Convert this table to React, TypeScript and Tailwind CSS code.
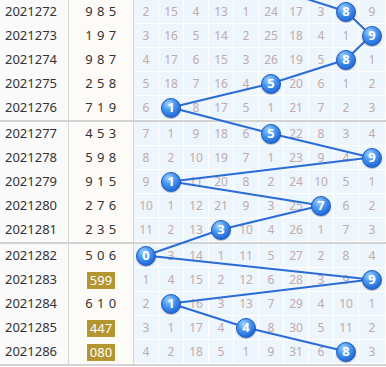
const rows = [
  { id: "2021272", num: "985", hl: false, ball: 8, miss: [2, 15, 4, 13, 1, 24, 17, 3, 8, 9] },
  { id: "2021273", num: "197", hl: false, ball: 9, miss: [3, 16, 5, 14, 2, 25, 18, 4, 1, 9] },
  { id: "2021274", num: "987", hl: false, ball: 8, miss: [4, 17, 6, 15, 3, 26, 19, 5, 8, 1] },
  { id: "2021275", num: "258", hl: false, ball: 5, miss: [5, 18, 7, 16, 4, 5, 20, 6, 1, 2] },
  { id: "2021276", num: "719", hl: false, ball: 1, miss: [6, 1, 8, 17, 5, 1, 21, 7, 2, 3] },
  { id: "2021277", num: "453", hl: false, ball: 5, miss: [7, 1, 9, 18, 6, 5, 22, 8, 3, 4] },
  { id: "2021278", num: "598", hl: false, ball: 9, miss: [8, 2, 10, 19, 7, 1, 23, 9, 4, 9] },
  { id: "2021279", num: "915", hl: false, ball: 1, miss: [9, 1, 11, 20, 8, 2, 24, 10, 5, 1] },
  { id: "2021280", num: "276", hl: false, ball: 7, miss: [10, 1, 12, 21, 9, 3, 25, 7, 6, 2] },
  { id: "2021281", num: "235", hl: false, ball: 3, miss: [11, 2, 13, 3, 10, 4, 26, 1, 7, 3] },
  { id: "2021282", num: "506", hl: false, ball: 0, miss: [0, 3, 14, 1, 11, 5, 27, 2, 8, 4] },
  { id: "2021283", num: "599", hl: true, ball: 9, miss: [1, 4, 15, 2, 12, 6, 28, 3, 9, 9] },
  { id: "2021284", num: "610", hl: false, ball: 1, miss: [2, 1, 16, 3, 13, 7, 29, 4, 10, 1] },
  { id: "2021285", num: "447", hl: true, ball: 4, miss: [3, 1, 17, 4, 4, 8, 30, 5, 11, 2] },
  { id: "2021286", num: "080", hl: true, ball: 8, miss: [4, 2, 18, 5, 1, 9, 31, 6, 8, 3] },
];

const groups = [rows.slice(0, 5), rows.slice(5, 10), rows.slice(10, 15)];

// ball centre in page pixels
const cx = (c: number) => 146 + 25 * c;
const cy = (i: number) => Math.floor(i / 5) * 122 + (i % 5) * 24 + 11.5;

function Ball({ n }: { n: number }) {
  return (
    <div className="relative z-20 flex h-[20px] w-[20px] items-center justify-center rounded-full border border-[#1b58bd] bg-[radial-gradient(circle_at_38%_28%,#a9d3ff_0%,#4d9bf0_35%,#2570dc_70%,#1a56c0_100%)] text-[13px] font-bold leading-none text-white shadow-[0_1px_1px_rgba(0,0,0,0.25)]">
      {n}
    </div>
  );
}

function TrendLines() {
  const pts = [[cx(5), -12.5], ...rows.map((r, i) => [cx(r.ball), cy(i)])];
  return (
    <svg
      className="pointer-events-none absolute left-0 top-0 z-10"
      width={386}
      height={367}
      viewBox="0 0 386 367"
    >
      <polyline
        points={pts.map((p) => p.join(",")).join(" ")}
        fill="none"
        stroke="#2b6bd6"
        strokeWidth={2}
      />
    </svg>
  );
}

export default function App() {
  return (
    <div className="relative h-[367px] w-[386px] overflow-hidden bg-white font-['Noto_Sans',sans-serif]">
      <TrendLines />
      {groups.map((g, gi) => (
        <div key={gi} className="border-b-2 border-[#d3d3d3]">
          {g.map((r) => (
            <div key={r.id} className="flex h-6">
              <div className="flex w-[69px] items-center border-r border-[#d6d6d6] bg-[#fafafa] pl-[5px] text-[13px] text-[#333]">
                {r.id}
              </div>
              <div className="flex w-[65px] items-center justify-center border-r border-[#d6d6d6] bg-[#fdfbf7] text-[13px] text-[#333]">
                {r.hl ? (
                  <span className="bg-[#b4952f] px-[3px] leading-[17px] text-white">{r.num}</span>
                ) : (
                  <span className="tracking-[0.5px]">{r.num.split("").join(" ")}</span>
                )}
              </div>
              <div className="grid flex-1 grid-cols-[repeat(9,25px)_1fr]">
                {r.miss.map((m, c) => (
                  <div
                    key={c}
                    className="flex items-center justify-center border-b border-r border-white bg-[#edf5fd] text-[12px] text-[#c2abab]"
                  >
                    {c === r.ball ? <Ball n={c} /> : m}
                  </div>
                ))}
              </div>
            </div>
          ))}
        </div>
      ))}
    </div>
  );
}
